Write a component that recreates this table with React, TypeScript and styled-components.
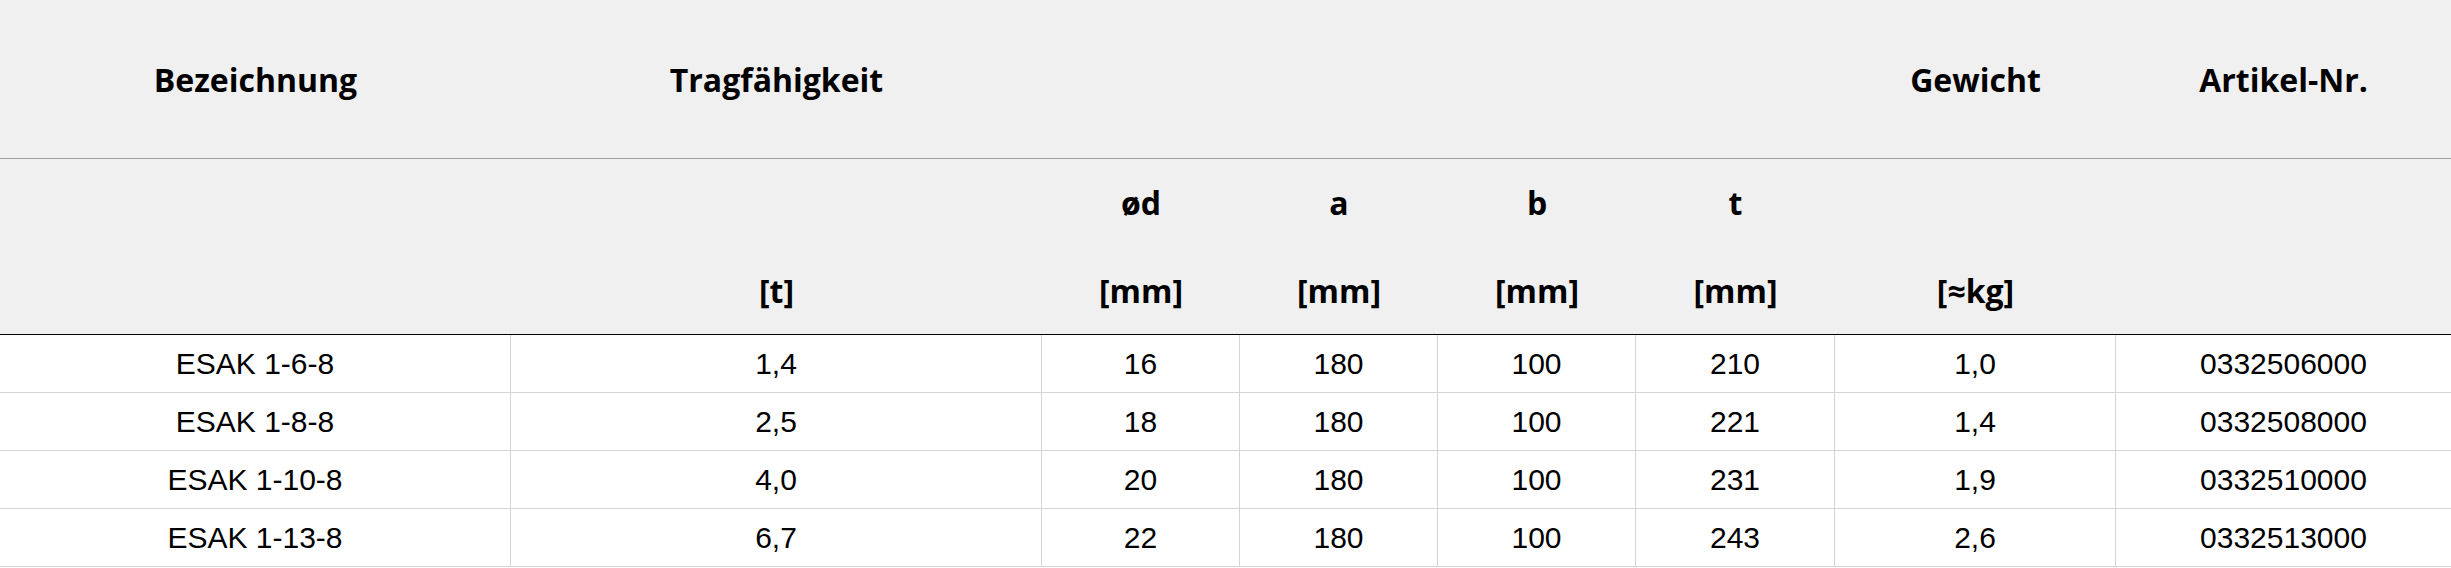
import React from 'react'
import styled, { createGlobalStyle } from 'styled-components'

const GlobalStyle = createGlobalStyle`
  html, body {
    margin: 0;
    padding: 0;
    background: #ffffff;
  }
`

const Table = styled.table`
  width: 2451px;
  table-layout: fixed;
  border-collapse: separate;
  border-spacing: 0;
`

const HeadCell = styled.th<{ $h: number; $line?: 'gray' | 'black' }>`
  box-sizing: border-box;
  height: ${p => p.$h}px;
  padding: 0;
  background: #f0f0f0;
  font-family: "Open Sans", "Liberation Sans", sans-serif;
  font-weight: 700;
  font-size: 32px;
  color: #000;
  text-align: center;
  vertical-align: middle;
  white-space: nowrap;
  border-bottom: ${p =>
    p.$line === 'gray' ? '1px solid #a0a0a0' : p.$line === 'black' ? '1px solid #000' : 'none'};
`

const Cell = styled.td<{ $last?: boolean }>`
  box-sizing: border-box;
  height: 58px;
  padding: 0;
  font-family: "Liberation Sans", Arial, sans-serif;
  font-size: 30px;
  color: #000;
  text-align: center;
  vertical-align: middle;
  white-space: nowrap;
  border-bottom: 1px solid #d4d4d4;
  border-right: ${p => (p.$last ? 'none' : '1px solid #d4d4d4')};
`

const widths = [511, 531, 198, 198, 198, 199, 281, 335]

const rows = [
  ['ESAK 1-6-8', '1,4', '16', '180', '100', '210', '1,0', '0332506000'],
  ['ESAK 1-8-8', '2,5', '18', '180', '100', '221', '1,4', '0332508000'],
  ['ESAK 1-10-8', '4,0', '20', '180', '100', '231', '1,9', '0332510000'],
  ['ESAK 1-13-8', '6,7', '22', '180', '100', '243', '2,6', '0332513000'],
]

const top = ['Bezeichnung', 'Tragfähigkeit', '', '', '', '', 'Gewicht', 'Artikel-Nr.']
const symbols = ['', '', 'ød', 'a', 'b', 't', '', '']
const units = ['', '[t]', '[mm]', '[mm]', '[mm]', '[mm]', '[≈kg]', '']

export default function App() {
  return (
    <>
      <GlobalStyle />
      <Table>
        <colgroup>
          {widths.map((w, i) => (
            <col key={i} style={{ width: w }} />
          ))}
        </colgroup>
        <thead>
          <tr>
            {top.map((t, i) => (
              <HeadCell key={i} $h={159} $line="gray">{t}</HeadCell>
            ))}
          </tr>
          <tr>
            {symbols.map((t, i) => (
              <HeadCell key={i} $h={87}>{t}</HeadCell>
            ))}
          </tr>
          <tr>
            {units.map((t, i) => (
              <HeadCell key={i} $h={89} $line="black">{t}</HeadCell>
            ))}
          </tr>
        </thead>
        <tbody>
          {rows.map(r => (
            <tr key={r[0]}>
              {r.map((v, i) => (
                <Cell key={i} $last={i === r.length - 1}>{v}</Cell>
              ))}
            </tr>
          ))}
        </tbody>
      </Table>
    </>
  )
}
